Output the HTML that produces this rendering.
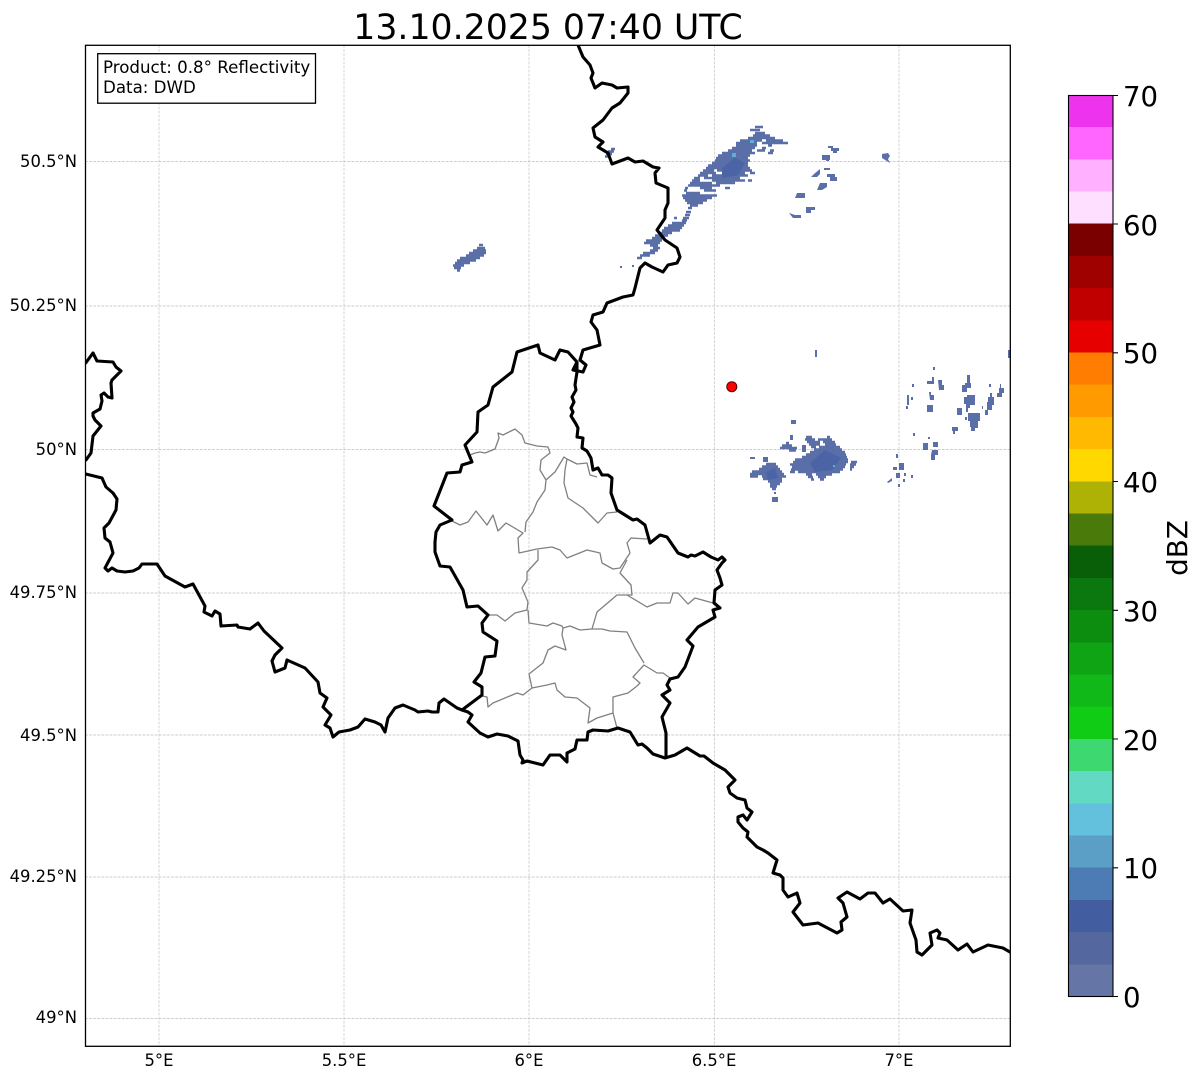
<!DOCTYPE html>
<html>
<head>
<meta charset="utf-8">
<style>
html,body{margin:0;padding:0;background:#fff;width:1202px;height:1081px;overflow:hidden}
svg{display:block}
text{font-family:"DejaVu Sans",sans-serif;fill:#000}
</style>
</head>
<body>
<svg width="1202" height="1081" viewBox="0 0 1202 1081" xmlns="http://www.w3.org/2000/svg">
<defs><clipPath id="ax"><rect x="85.5" y="45.5" width="924.5" height="1001"/></clipPath></defs>
<rect width="1202" height="1081" fill="#fff"/>
<text x="548" y="39" font-size="34.7" text-anchor="middle">13.10.2025 07:40 UTC</text>
<g clip-path="url(#ax)">
<g stroke="#bebebe" stroke-width=".65" stroke-dasharray="2.8 1.3" fill="none">
<path d="M159 45V1046M344 45V1046M529 45V1046M714.5 45V1046M899 45V1046"/>
<path d="M85 161.5H1010M85 306H1010M85 449.5H1010M85 593H1010M85 735H1010M85 877H1010M85 1018.5H1010"/>
</g>
<g fill="none" stroke="#5a6ea8" stroke-width="2.6">
<path d="M755 127H763M750 130H760M755 133H765M753 135.5H770M748 138H775M740 140.5H762M766 140.5H783M736 143H757M762 143H788M736 145.5H757M768 145.5H772M732 148H755M762 148H766M728 150.5H752M757 150.5H765M770 150.5H774M722 153H755M768 153H773M718 155.5H750M716 158H748M715 160.5H750M712 163H748M708 165.5H748M706 168H750M703 170.5H714M717 170.5H752M700 173H716M722 173H745M750 173H755M698 175.5H708M712 175.5H748M694 178H700M704 178H740M692 180.5H700M712 180.5H745M748 180.5H752M690 183H712M716 183H735M688 185.5H720M685 188H688M700 188H712M725 188H730M684 190.5H687M704 190.5H716M686 193H700M682 195.5H717M683 198H712M685 200.5H707M687 203H703M690 205.5H698M688 208H692"/>
<path d="M686 212H691M685 215H690M683 218H689M674 218H677M682 220.5H687M672 223H686M668 225.5H684M664 228H682M662 230.5H680M660 233H672M655 235.5H668M652 238H664M646 240.5H662M644 243H660M650 245.5H658M653 248H660M650 250.5H658M643 253H655M640 255.5H650M637 258H642"/>
<path d="M479 245H483M477 248H485M473 250.5H486M469 253H486M466 255.5H484M460 258H480M457 260.5H476M455 263H470M453 265.5H464M454 268H461M457 270.5H460"/>
<path d="M611 149H615M608 151.5H614M606 154H612M605 156.5H609"/>
<path d="M806 437H812M827 437H830M805 439.5H815M818 439.5H832M807 442H820M823 442H835M809 444.5H820M825 444.5H836M811 447H816M819 447H840M814 449.5H842M810 452H845M806 454.5H846M802 457H847M795 459.5H848M793 462H848M851 462H857M790 464.5H846M850 464.5H856M792 467H845M850 467H854M791 469.5H843M850 469.5H852M790 472H795M798 472H840M806 474.5H812M816 474.5H832M808 477H813M818 477H826M811 479.5H814M820 479.5H824"/>
<path d="M766 464H776M762 466.5H778M759 469H780M752 471.5H782M750 474H784M750 476.5H758M762 476.5H786M763 479H782M768 481.5H782M770 484H780M770 486.5H777M772 489H776"/>
<path d="M786 443H789M782 445.5H792M780 448H797M789 450.5H796"/>
</g>
<g fill="#5a6ea8">
<path d="M828 146h5v2h-5zM831 148h8v3h-8zM833 151h4v2h-4zM822 155h8v5h-8zM826 158h3v3h-3zM824 168h6v2h-6zM827 174h8v3h-8zM830 177h7v4h-7zM814 174l6-5v5l-3 3h-6zM820 183h7v4l-5 3h-5zM797 193h8v5h-10zM806 207h9v3h-4v3h-5zM789 213l6 2h6v3h-8z"/>
<path d="M882 154l6-1 2 3-2 3 2 4-8-5zM620 266h2v2h-2zM632 265h2v2h-2z"/>
<path d="M802 445h4v7h-4zM791 420h5v4h-5zM790 435h3v5h-3zM750 457h5v2h-5zM763 457h5v5h-5zM772 497h6v5h-6zM815 350h2v7h-2zM774 492h2v2h-2z"/>
<path d="M896 454h2v4h-2zM893 467h4v3h-4zM899 463h5v7h-5zM896 473h4v5h-4zM887 482l5-4v3l-4 2zM904 473h2v3h-2zM903 479h2v3h-2zM911 475h2v3h-2zM898 484h2v3h-2z"/>
<path d="M923 443h5v7h-5zM933 442h5v5h-5zM932 450h6v5h-3v5h-4v-5zM913 433h2v3h-2zM928 437h2v2h-2zM952 427h6v4h-3v3h-2v-3h-1z"/>
<path d="M933 367h2v3h-2zM932 377h2v7h-7v-3h5zM938 380h4v5h2v5h-5zM912 384h2v3h-2zM907 395h2v10h-2zM911 397h2v3h-2zM906 406h2v3h-2zM929 392h2v3h3v5h-4zM927 405h6v7h-6z"/>
<path d="M967 375h3v8h1v5h-4v7h8v10h-5v3h-2v4h-2v-8h-2v-7h3v-5h-5v-7h3v-2h2zM957 408h5v7h-5zM965 417h2v3h-2zM968 413h12v8h-2v7h-3v3h-4v-4h-1v-6h-2z"/>
<path d="M985 410h3v5h-3zM987 402h1v-5h2v-4h2v4h2v8h-2v5h-5zM997 393h2v-5h1v-4h1v4h3v5h-2v4h-5zM989 384h2v3h-2zM982 406h1v3h-1zM1008 350h2v8h-2z"/>
</g>
<g fill="#4a64a6">
<path d="M722 168L735 158L745 163L738 175L722 178ZM810 463L825 450L841 458L832 470L815 472ZM766 472L775 468L778 478L768 480Z"/>
</g>
<g fill="#5cb0d8">
<rect x="750" y="140" width="4" height="3"/><rect x="732" y="153" width="4" height="4"/><rect x="833" y="465" width="2" height="2"/>
</g>
<g fill="none" stroke="#808080" stroke-width="1.3" stroke-linejoin="round">
<path d="M470 455L475 453L480 452L485 453L495 449L499 438L498 433L503 435L515 429L522 435L525 443L537 446L548 447L550 453L541 460L540 470L546 480L545 490L537 502L533 512L526 522L525 532"/>
<path d="M452 521L460 525L468 522L476 511L487 525L493 515L498 531L506 523L523 533L518 538L519 553L537 549L552 547L560 550L567 558L587 550L600 553L602 563L613 569L620 568L630 553L627 543L631 538L647 539"/>
<path d="M546 480L555 472L564 457L567 459L565 470L564 483L568 498L583 508L598 523L607 513L617 512"/>
<path d="M567 459L577 464L587 463L590 475L597 477"/>
<path d="M538 550L538 560L527 572L527 580L522 588L528 602L527 610L515 613L505 621L497 615L488 615"/>
<path d="M528 610L529 623L547 626L553 623L562 626L563 628L570 626L580 630L592 629L602 629L610 631L627 632L635 648L644 663"/>
<path d="M563 628L562 635L566 650L555 646L548 650L543 663L529 674L532 688L547 685L555 683L557 690L565 697L577 698L590 708L588 723L597 718L613 713L617 728"/>
<path d="M613 713L613 697L628 693L637 686L640 683L633 677L644 665L657 673L663 673L670 678"/>
<path d="M532 688L523 695L517 693L493 703L488 707L487 697L482 696"/>
<path d="M592 629L597 612L617 595L627 595L647 607L657 603L670 603L673 593L678 593L688 604L695 598L713 603"/>
<path d="M627 595L632 595L631 585L620 573L627 560"/>
</g>
<g fill="none" stroke="#000" stroke-width="3.1" stroke-linejoin="round" stroke-linecap="round">
<path d="M85.7 363L93 353L97 361L113 362L116 367L121 371L112 380L111 383L112 398L108 397L104 393L101 395L102 401L100 409L93 413L93 416L95 420L101 426L93 436L91 453L86 460"/>
<path d="M85.7 474L102 478L106 487L113 493L117 499L116 510L109 523L104 528L105 538L110 542L113 553L105 568L108 571L112 568L117 571L125 572L133 571L139 568L142 564L157 564L165 576L185 587L193 584L205 606L204 612L212 616L215 611L220 614L221 626L237 625L238 627L250 629L258 623L264 631L282 648L275 655L272 661L275 672L285 668L287 660L305 668L318 682L320 693L327 698L323 707L331 715L325 725L330 728L333 737L339 732L350 730L358 727L365 719L375 722L381 725L385 732L388 718L395 708L403 705L415 710L418 712L428 711L432 712L438 712L439 703L444 699L457 708L462 710L468 712L472 715L468 722L480 733L488 737L497 734L508 736L518 741L520 755L523 760L522 763L527 761L543 765L550 755L560 755L567 762L567 753L575 749L577 740L587 740L588 732L593 730L608 731L618 728L630 732L638 745L642 744L647 748L653 754L665 758L675 755L687 748L700 756L704 756L713 763L725 770L735 780L728 787L730 793L737 798L745 800L747 808L752 812L747 820L743 815L738 817L738 822L743 828L748 832L747 837L757 847L763 850L768 853L777 860L773 873L780 875L783 878L783 890L788 897L797 893L800 903L793 912L803 925L818 923L837 933L842 930L841 922L847 917L843 903L838 898L847 892L860 899L868 893L875 893L883 903L890 899L903 911L912 910L910 923L916 940L917 952L922 955L932 945L930 933L937 930L940 933L938 938L947 940L958 950L967 944L973 952L988 945L1003 948L1010 952"/>
<path d="M462 710L482 695L482 687L474 682L481 673L485 657L495 656L497 641L483 632L482 623L488 615L478 606L467 607L463 590L450 567L440 566L435 552L435 542L436 532L440 525L452 520L434 506L447 473L460 472L462 465L472 462L465 445L477 432L478 412L488 405L493 387L512 372L517 352L538 345L540 353L555 360L560 350L568 352L577 362L573 370L583 372L586 365L580 360L583 350L600 345L597 330L591 322L593 315L603 312L607 303L623 297L633 295L635 288L640 268L645 263L652 267L663 272L668 265L677 263L680 257L677 248L665 240L657 230L665 218L665 210L668 203L668 188L656 183L655 173L659 168L653 167L643 161L635 162L628 158L620 161L612 164L608 153L598 147L603 142L595 137L593 128L603 120L612 108L620 103L628 93L628 87L617 88L612 85L602 83L595 88L591 78L593 73L590 65L583 57L578 45"/>
<path d="M577 362L577 372L575 385L576 390L572 397L574 402L571 408L573 412L571 416L576 424L578 428L577 437L583 438L582 448L587 451L591 458L593 470L598 468L602 475L608 475L612 478L611 493L617 510L633 520L637 519L645 525L650 543L660 535L667 537L678 553L688 557L691 555L695 556L703 552L711 557L718 560L722 557L725 560L722 563L717 570L720 578L722 585L715 590L714 603L720 608L713 610L715 617L698 627L687 640L693 646L685 667L678 677L670 679L667 685L670 690L662 695L670 703L662 717L666 733L666 757"/>
</g>
<circle cx="731.8" cy="386.7" r="5" fill="#f00" stroke="#500" stroke-width="1"/>
</g>
<rect x="85.5" y="45.3" width="924.8" height="1001" fill="none" stroke="#000" stroke-width="1.3"/>
<rect x="97.7" y="53.7" width="217.8" height="49.5" fill="#fff" stroke="#000" stroke-width="1.3"/>
<text x="103" y="73" font-size="16.67">Product: 0.8° Reflectivity</text>
<text x="103" y="93" font-size="16.67">Data: DWD</text>
<g font-size="16.4" text-anchor="end">
<text x="77" y="167">50.5°N</text>
<text x="77" y="311">50.25°N</text>
<text x="77" y="455">50°N</text>
<text x="77" y="598">49.75°N</text>
<text x="77" y="741">49.5°N</text>
<text x="77" y="882">49.25°N</text>
<text x="77" y="1023">49°N</text>
</g>
<g font-size="16.4" text-anchor="middle">
<text x="159" y="1066">5°E</text>
<text x="344" y="1066">5.5°E</text>
<text x="529" y="1066">6°E</text>
<text x="714" y="1066">6.5°E</text>
<text x="899" y="1066">7°E</text>
</g>
<g shape-rendering="crispEdges">
<rect x="1068" y="964.3" width="45" height="32.2" fill="#6475a6"/>
<rect x="1068" y="932.1" width="45" height="32.2" fill="#55679f"/>
<rect x="1068" y="899.9" width="45" height="32.2" fill="#435ea0"/>
<rect x="1068" y="867.7" width="45" height="32.2" fill="#4c7cb3"/>
<rect x="1068" y="835.5" width="45" height="32.2" fill="#5b9fc6"/>
<rect x="1068" y="803.3" width="45" height="32.2" fill="#64c1dd"/>
<rect x="1068" y="771.1" width="45" height="32.2" fill="#62d9c2"/>
<rect x="1068" y="738.9" width="45" height="32.2" fill="#3dd870"/>
<rect x="1068" y="706.7" width="45" height="32.2" fill="#10cc14"/>
<rect x="1068" y="674.5" width="45" height="32.2" fill="#10b918"/>
<rect x="1068" y="642.3" width="45" height="32.2" fill="#0ea414"/>
<rect x="1068" y="610.1" width="45" height="32.2" fill="#0c8d10"/>
<rect x="1068" y="577.9" width="45" height="32.2" fill="#0a780e"/>
<rect x="1068" y="545.7" width="45" height="32.2" fill="#085f08"/>
<rect x="1068" y="513.5" width="45" height="32.2" fill="#497a0a"/>
<rect x="1068" y="481.3" width="45" height="32.2" fill="#adb205"/>
<rect x="1068" y="449.1" width="45" height="32.2" fill="#ffd800"/>
<rect x="1068" y="416.9" width="45" height="32.2" fill="#ffb900"/>
<rect x="1068" y="384.7" width="45" height="32.2" fill="#ff9a00"/>
<rect x="1068" y="352.5" width="45" height="32.2" fill="#ff7d00"/>
<rect x="1068" y="320.3" width="45" height="32.2" fill="#e60000"/>
<rect x="1068" y="288.1" width="45" height="32.2" fill="#c00000"/>
<rect x="1068" y="255.9" width="45" height="32.2" fill="#9f0000"/>
<rect x="1068" y="223.7" width="45" height="32.2" fill="#7a0000"/>
<rect x="1068" y="191.5" width="45" height="32.2" fill="#ffdfff"/>
<rect x="1068" y="159.3" width="45" height="32.2" fill="#ffb0ff"/>
<rect x="1068" y="127.1" width="45" height="32.2" fill="#ff66ff"/>
<rect x="1068" y="95" width="45" height="32.2" fill="#ee33ee"/>
</g>
<rect x="1068.5" y="95.5" width="44.5" height="901" fill="none" stroke="#000" stroke-width="1.1"/>
<path d="M1113 95.5h5M1113 224h5M1113 352.8h5M1113 481.5h5M1113 610.3h5M1113 739h5M1113 867.8h5M1113 996.5h5" stroke="#000" stroke-width="1.1"/>
<g font-size="27.6">
<text x="1123" y="106">70</text>
<text x="1123" y="235">60</text>
<text x="1123" y="363">50</text>
<text x="1123" y="492">40</text>
<text x="1123" y="621">30</text>
<text x="1123" y="750">20</text>
<text x="1123" y="878">10</text>
<text x="1123" y="1007">0</text>
</g>
<text transform="translate(1187 548) rotate(-90)" font-size="27.8" text-anchor="middle">dBZ</text>
</svg>
</body>
</html>
